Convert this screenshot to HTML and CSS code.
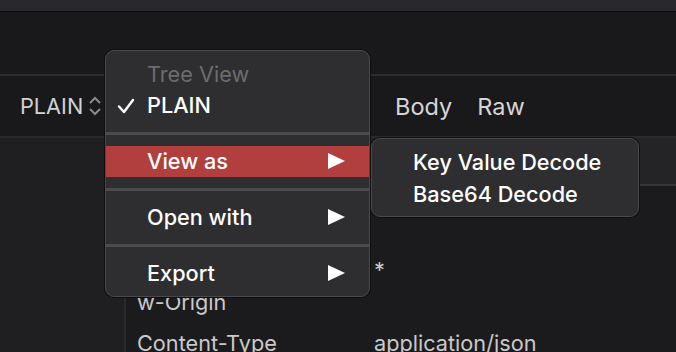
FILE: index.html
```html
<!DOCTYPE html>
<html>
<head>
<meta charset="utf-8">
<link rel="stylesheet" href="styles.css">
</head>
<body>
<div class="app">
  <div class="titlebar"></div>
  <div class="toolbar"></div>
  <div class="tabrow">
    <div class="format">
      <span>PLAIN</span>
      <svg class="updown" width="14" height="20" viewBox="0 0 14 20"><polyline points="2,7 7,2 12,7" fill="none" stroke="#8a8a8c" stroke-width="2"/><polyline points="2,13 7,18 12,13" fill="none" stroke="#8a8a8c" stroke-width="2"/></svg>
    </div>
    <div class="tabs">
      <span class="tab">Body</span>
      <span class="tab">Raw</span>
    </div>
  </div>
  <div class="main">
    <div class="sidebar"></div>
    <div class="content">
      <div class="thead"></div>
      <div class="row first">
        <div class="key">Access-Control-Allo<br>w-Origin</div>
        <div class="val">*</div>
      </div>
      <div class="row">
        <div class="key">Content-Type</div>
        <div class="val">application/json</div>
      </div>
    </div>
  </div>

  <div class="menu">
    <div class="item disabled">Tree View</div>
    <div class="item"><svg class="check" width="18" height="16" viewBox="0 0 18 16"><polyline points="2,8.5 7,14 16,2" fill="none" stroke="#fff" stroke-width="2.4" stroke-linecap="round" stroke-linejoin="round"/></svg>PLAIN</div>
    <div class="sep"></div>
    <div class="item active">View as<span class="arrow"></span></div>
    <div class="sep"></div>
    <div class="item">Open with<span class="arrow"></span></div>
    <div class="sep"></div>
    <div class="item">Export<span class="arrow"></span></div>
  </div>

  <div class="submenu">
    <div class="item">Key Value Decode</div>
    <div class="item">Base64 Decode</div>
  </div>
</div>
</body>
</html>
```

FILE: styles.css
```css
* { box-sizing: border-box; }
html, body { margin: 0; padding: 0; }
body {
  width: 676px;
  height: 352px;
  overflow: hidden;
  background: #19191b;
  font-family: Inter, "Noto Sans", sans-serif;
  font-size: 21.7px;
}
.app {
  position: relative;
  width: 676px;
  height: 352px;
  display: flex;
  flex-direction: column;
  overflow: hidden;
}
.titlebar {
  flex-shrink: 0;
  height: 12px;
  background: #29292d;
  border-bottom: 1px solid #0c0c0d;
}
.toolbar {
  flex-shrink: 0;
  height: 64px;
  background: #19191b;
  border-bottom: 2px solid #2d2d2f;
}
.tabrow {
  flex-shrink: 0;
  height: 62px;
  display: flex;
  align-items: center;
  background: #19191b;
  border-bottom: 2px solid #2a2a2c;
}
.format {
  width: 395px;
  display: flex;
  align-items: center;
  gap: 5px;
  padding-left: 20px;
  color: #d2d2d2;
}
.updown { display: block; }
.tabs {
  display: flex;
  gap: 25px;
  color: #d6d6d6;
  font-size: 23.5px;
}
.main {
  flex: 1;
  display: flex;
  min-height: 0;
}
.sidebar {
  width: 126px;
  background: #1f1f21;
  border-right: 2px solid #2a2a2c;
}
.content {
  flex: 1;
  background: #1b1b1d;
  color: #c9c9c9;
}
.thead {
  height: 48px;
  background: #242427;
  border-bottom: 2px solid #363638;
}
.row {
  display: flex;
  padding-left: 11px;
  line-height: 32px;
  margin-top: 9px;
}
.row.first { margin-top: 68px; }
.key { width: 237px; }
.val { flex: 1; }

.menu {
  position: absolute;
  left: 105px;
  top: 50px;
  width: 265px;
  height: 247px;
  background: #2e2e30;
  border: 1px solid #4a4a4d;
  border-radius: 9px;
  box-shadow: 0 0 0 1px #0e0e10;
  padding: 8px 0 7px;
  overflow: hidden;
  color: #ffffff;
  font-weight: 500;
}
.item {
  position: relative;
  height: 31px;
  line-height: 31px;
  padding-left: 41px;
}
.item.disabled { color: #6c6c6e; font-weight: 400; }
.item.active { background: #b03f3e; }
.check {
  position: absolute;
  left: 11px;
  top: 8px;
}
.sep {
  height: 3px;
  margin: 11px 0;
  background: #4b4b4d;
}
.arrow {
  position: absolute;
  right: 24px;
  top: 7px;
  width: 0;
  height: 0;
  border-top: 8.5px solid transparent;
  border-bottom: 8.5px solid transparent;
  border-left: 17px solid #ffffff;
}
.submenu {
  position: absolute;
  left: 371px;
  top: 138px;
  width: 268px;
  height: 79px;
  background: #2e2e30;
  border: 1px solid #4a4a4d;
  border-radius: 9px;
  box-shadow: 0 0 0 1px #0e0e10;
  padding: 7px 0;
  color: #ffffff;
  font-weight: 500;
}
.submenu .item { height: 32px; line-height: 32px; }
```
